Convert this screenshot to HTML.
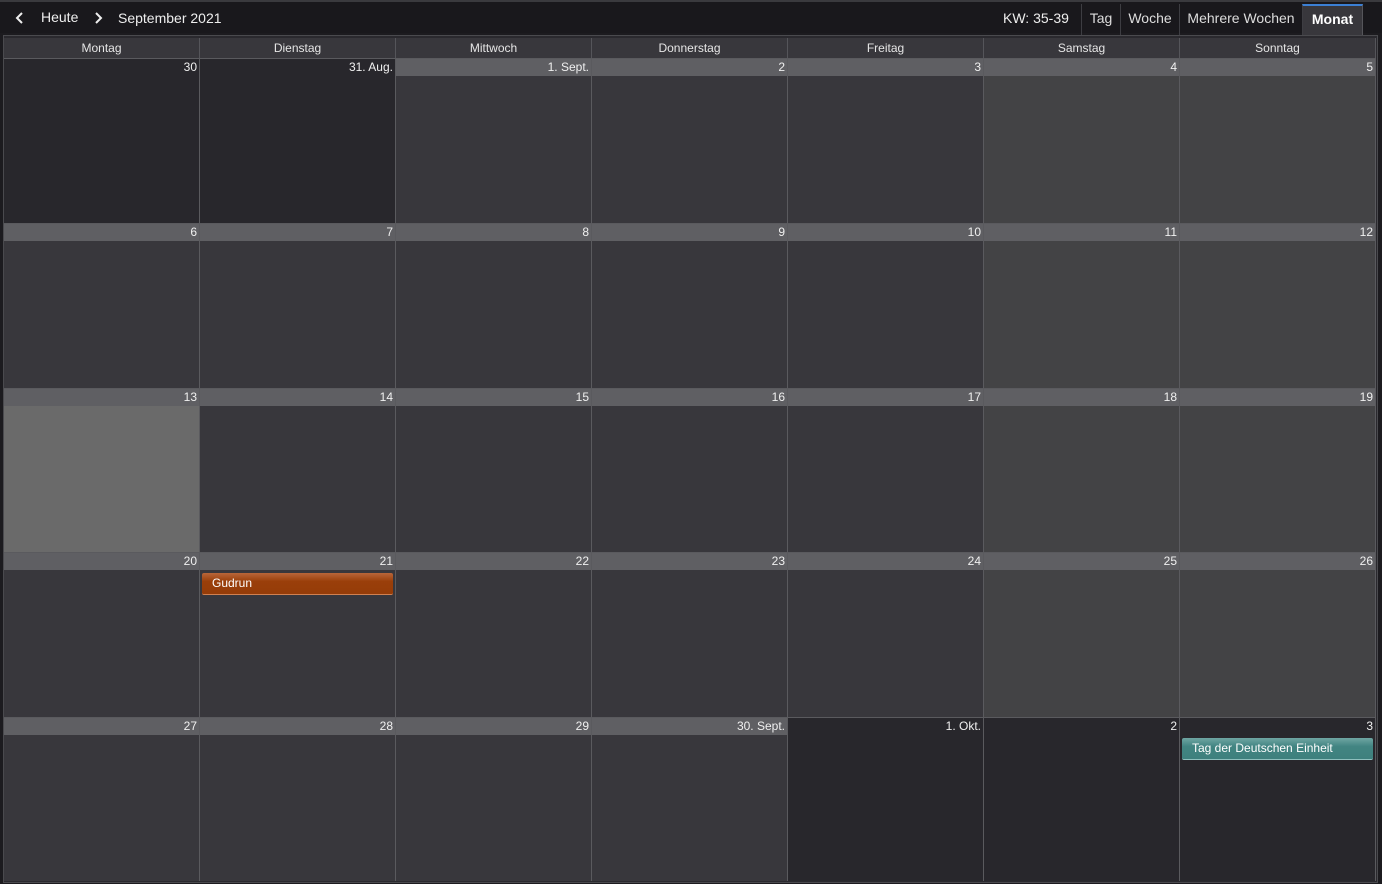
<!DOCTYPE html><html><head><style>
body{margin:0;width:1382px;height:884px;background:#1c1b1f;font-family:"Liberation Sans",sans-serif;position:relative;overflow:hidden;color:#fff}
.top{position:absolute;left:0;top:0;width:1382px;height:33px;background:#19181c;border-top:2px solid #3a3a3e;box-sizing:border-box}
.t{position:absolute;top:8px;font-size:14px;color:#eee}
.tab{position:absolute;top:2px;height:31px;border-left:1px solid #3d3d42;font-size:14px;color:#ddd;line-height:29px;text-align:center;box-sizing:border-box}
.frame{position:absolute;left:3px;top:35px;width:1375px;height:848px;background:#2a292e;border:1px solid #4a4a4e;box-sizing:border-box}
.hdr{position:absolute;top:38px;left:4px;display:grid;grid-template-columns:repeat(7,196px);height:20px}
.hdr div{background:#38373c;border-right:1px solid #55555a;font-size:12px;text-align:center;line-height:20px;color:#e6e6e6;box-sizing:border-box}
.grid{position:absolute;left:4px;top:58px;display:grid;grid-template-columns:repeat(7,196px);grid-template-rows:165px 165px 164px 165px 164px}
.c{background:#38373c;border-right:1px solid #5a5a5e;border-top:1px solid #5a5a5e;box-sizing:border-box;position:relative}
.c b{display:block;height:17px;background:#5f5f63;font-weight:normal;font-size:12px;text-align:right;padding-right:2px;line-height:17px;color:#f0f0f0}
.w{background:#434345}.o{background:#28272c}.o b{background:transparent}.td{background:#6a6a6a}
.ev{position:absolute;left:2px;right:2px;top:20px;height:21px;font-size:12px;line-height:21px;padding-left:10px;border-radius:2px;color:#fff}
</style></head><body>
<div class="top">
<svg style="position:absolute;left:15px;top:9px" width="10" height="14"><path d="M7 2 L2 7 L7 12" stroke="#eee" stroke-width="2" fill="none"/></svg>
<span class="t" style="left:41px;top:7px">Heute</span>
<svg style="position:absolute;left:93px;top:9px" width="10" height="14"><path d="M3 2 L8 7 L3 12" stroke="#eee" stroke-width="2" fill="none"/></svg>
<span class="t" style="left:118px">September 2021</span>
<span class="t" style="left:1003px">KW: 35-39</span>
<div class="tab" style="left:1081px;width:39px">Tag</div>
<div class="tab" style="left:1120px;width:59px">Woche</div>
<div class="tab" style="left:1179px;width:123px">Mehrere Wochen</div>
<div class="tab" style="left:1302px;width:61px;background:#38373c;border-top:2px solid #3b7fd4;font-weight:bold;color:#fff;border-right:1px solid #55555a;line-height:27px">Monat</div>
</div>
<div class="frame"></div>
<div class="hdr"><div>Montag</div><div>Dienstag</div><div>Mittwoch</div><div>Donnerstag</div><div>Freitag</div><div>Samstag</div><div>Sonntag</div></div>
<div class="grid">
<div class="c o"><b>30</b></div><div class="c o"><b>31. Aug.</b></div><div class="c"><b>1. Sept.</b></div><div class="c"><b>2</b></div><div class="c"><b>3</b></div><div class="c w"><b>4</b></div><div class="c w"><b>5</b></div>
<div class="c"><b>6</b></div><div class="c"><b>7</b></div><div class="c"><b>8</b></div><div class="c"><b>9</b></div><div class="c"><b>10</b></div><div class="c w"><b>11</b></div><div class="c w"><b>12</b></div>
<div class="c td"><b>13</b></div><div class="c"><b>14</b></div><div class="c"><b>15</b></div><div class="c"><b>16</b></div><div class="c"><b>17</b></div><div class="c w"><b>18</b></div><div class="c w"><b>19</b></div>
<div class="c"><b>20</b></div><div class="c"><b>21</b><div class="ev" style="background:linear-gradient(#b8663a,#9a3f0a 40%,#953c08);border-bottom:1px solid #d08050">Gudrun</div></div><div class="c"><b>22</b></div><div class="c"><b>23</b></div><div class="c"><b>24</b></div><div class="c w"><b>25</b></div><div class="c w"><b>26</b></div>
<div class="c"><b>27</b></div><div class="c"><b>28</b></div><div class="c"><b>29</b></div><div class="c"><b>30. Sept.</b></div><div class="c o"><b>1. Okt.</b></div><div class="c o"><b>2</b></div><div class="c o"><b>3</b><div class="ev" style="background:linear-gradient(#6fa5a3,#428582 40%,#3e807d);border-bottom:1px solid #8fc0be">Tag der Deutschen Einheit</div></div>
</div>
</body></html>
